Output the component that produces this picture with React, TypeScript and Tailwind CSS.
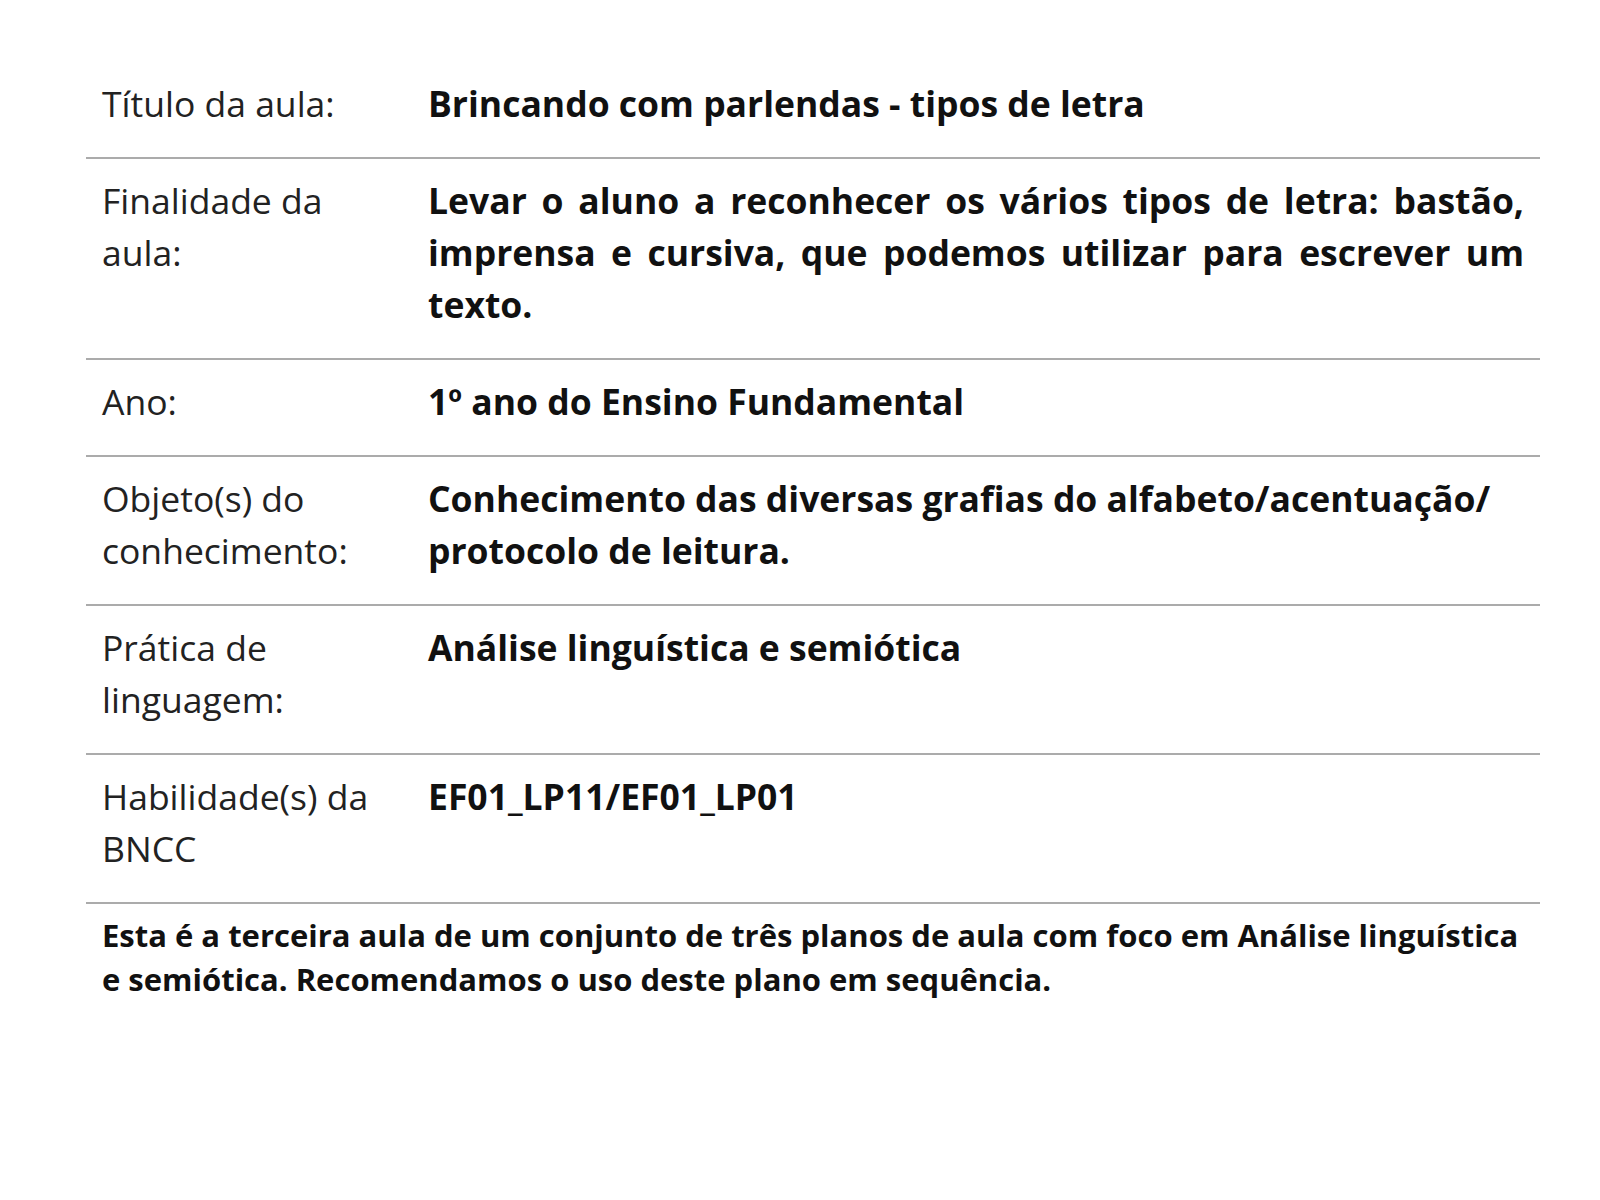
import { Fragment } from 'react';

const rows: { label: string; value: React.ReactNode; justify?: boolean }[] = [
  { label: 'Título da aula:', value: 'Brincando com parlendas - tipos de letra' },
  {
    label: 'Finalidade da aula:',
    value:
      'Levar o aluno a reconhecer os vários tipos de letra: bastão, imprensa e cursiva, que podemos utilizar para escrever um texto.',
    justify: true,
  },
  { label: 'Ano:', value: '1º ano do Ensino Fundamental' },
  {
    label: 'Objeto(s) do conhecimento:',
    value: (
      <Fragment>
        Conhecimento das diversas grafias do alfabeto/acentuação/
        <br />
        protocolo de leitura.
      </Fragment>
    ),
  },
  { label: 'Prática de linguagem:', value: 'Análise linguística e semiótica' },
  { label: 'Habilidade(s) da BNCC', value: 'EF01_LP11/EF01_LP01' },
];

export default function App() {
  return (
    <div className="min-h-screen bg-white font-['Open_Sans',sans-serif] text-[#111]">
      <div className="ml-[86px] w-[1454px] pt-[62px]">
        {rows.map((r, i) => (
          <div key={i} className="flex border-b-2 border-[#ababab] pt-[15px] pb-[28px]">
            <div className="w-[326px] shrink-0 px-4 text-[35.5px] leading-[52px] text-[#222]">{r.label}</div>
            <div
              className={
                r.justify
                  ? 'flex-1 px-4 text-justify text-[35.5px] font-bold leading-[52px]'
                  : 'flex-1 px-4 text-[35.5px] font-bold leading-[52px]'
              }
            >
              {r.value}
            </div>
          </div>
        ))}
        <p className="px-4 pt-[9px] text-[31px] font-bold leading-[44px]">
          Esta é a terceira aula de um conjunto de três planos de aula com foco em Análise linguística e semiótica.
          Recomendamos o uso deste plano em sequência.
        </p>
      </div>
    </div>
  );
}
